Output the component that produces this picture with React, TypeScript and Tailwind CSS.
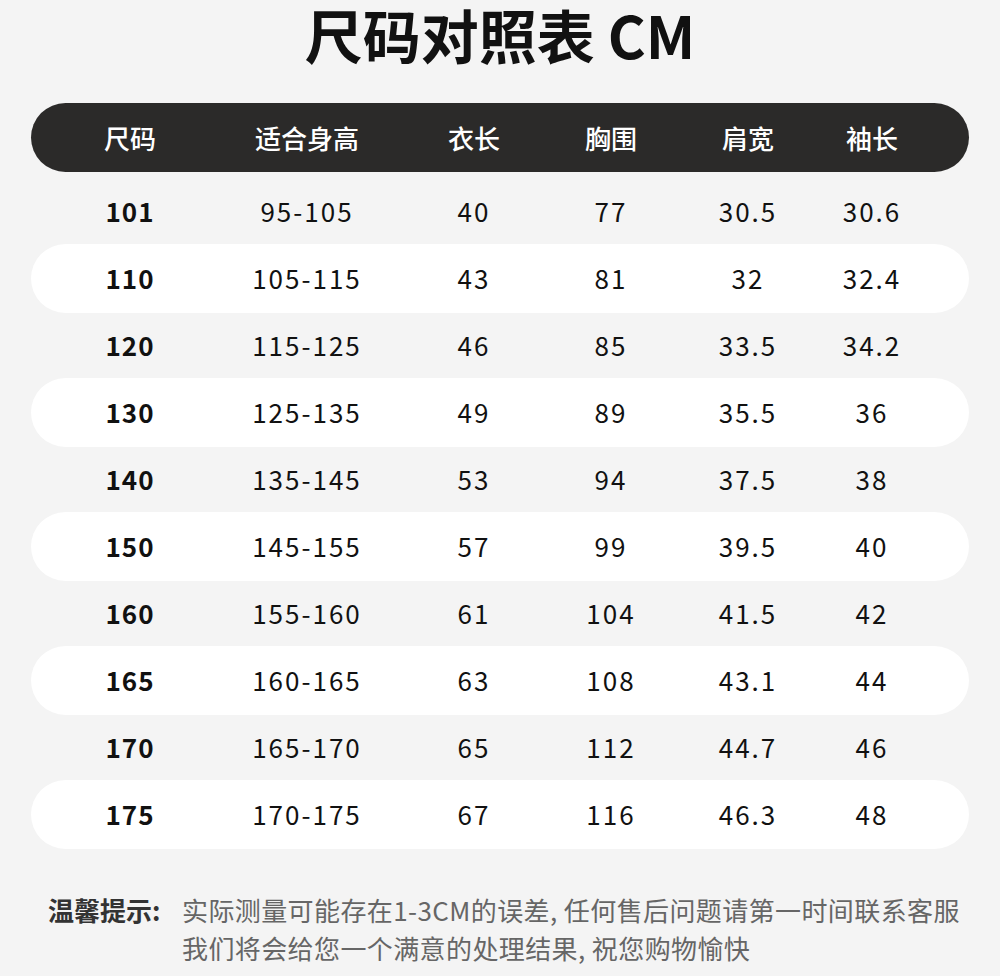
const rows = [
  ['101', '95-105', '40', '77', '30.5', '30.6'],
  ['110', '105-115', '43', '81', '32', '32.4'],
  ['120', '115-125', '46', '85', '33.5', '34.2'],
  ['130', '125-135', '49', '89', '35.5', '36'],
  ['140', '135-145', '53', '94', '37.5', '38'],
  ['150', '145-155', '57', '99', '39.5', '40'],
  ['160', '155-160', '61', '104', '41.5', '42'],
  ['165', '160-165', '63', '108', '43.1', '44'],
  ['170', '165-170', '65', '112', '44.7', '46'],
  ['175', '170-175', '67', '116', '46.3', '48'],
]

const headers = ['尺码', '适合身高', '衣长', '胸围', '肩宽', '袖长']

const cols = 'grid grid-cols-[198px_156px_178px_96px_178px_70px] items-center'

export default function App() {
  return (
    <div
      className="w-[1000px] h-[976px] bg-[#f4f4f4] text-[#111] overflow-hidden"
      style={{ fontFamily: '"Noto Sans CJK SC", "Noto Sans", sans-serif' }}
    >
      <div className="h-[103px] flex justify-center pt-[2px]">
        <h1 className="text-[58px] leading-[64px] font-bold">尺码对照表 CM</h1>
      </div>

      <div className="mx-[31px]">
        <div className={`${cols} h-[69px] rounded-full bg-[#2b2a29] text-white text-[26px] font-medium`}>
          {headers.map((h) => (
            <div key={h} className="text-center">{h}</div>
          ))}
        </div>

        <div className="mt-[5px]">
          {rows.map((r, i) => (
            <div
              key={r[0]}
              className={`${cols} h-[69px] -mb-[2px] rounded-full text-[26px] ${i % 2 === 1 ? 'bg-white' : ''}`}
            >
              {r.map((v, j) => (
                <div
                  key={j}
                  className={`text-center pb-[2px] ${j === 0 ? 'font-bold tracking-[1px]' : 'font-normal tracking-[2px]'}`}
                >
                  {v}
                </div>
              ))}
            </div>
          ))}
        </div>
      </div>

      <div className="flex mt-[44px] pl-[48px] text-[26px] leading-[38px]">
        <div className="font-bold text-[#333] w-[134px] shrink-0">温馨提示:</div>
        <div className="text-[#666] tracking-[0.4px]">
          <div>实际测量可能存在1-3CM的误差, 任何售后问题请第一时间联系客服</div>
          <div>我们将会给您一个满意的处理结果, 祝您购物愉快</div>
        </div>
      </div>
    </div>
  )
}
